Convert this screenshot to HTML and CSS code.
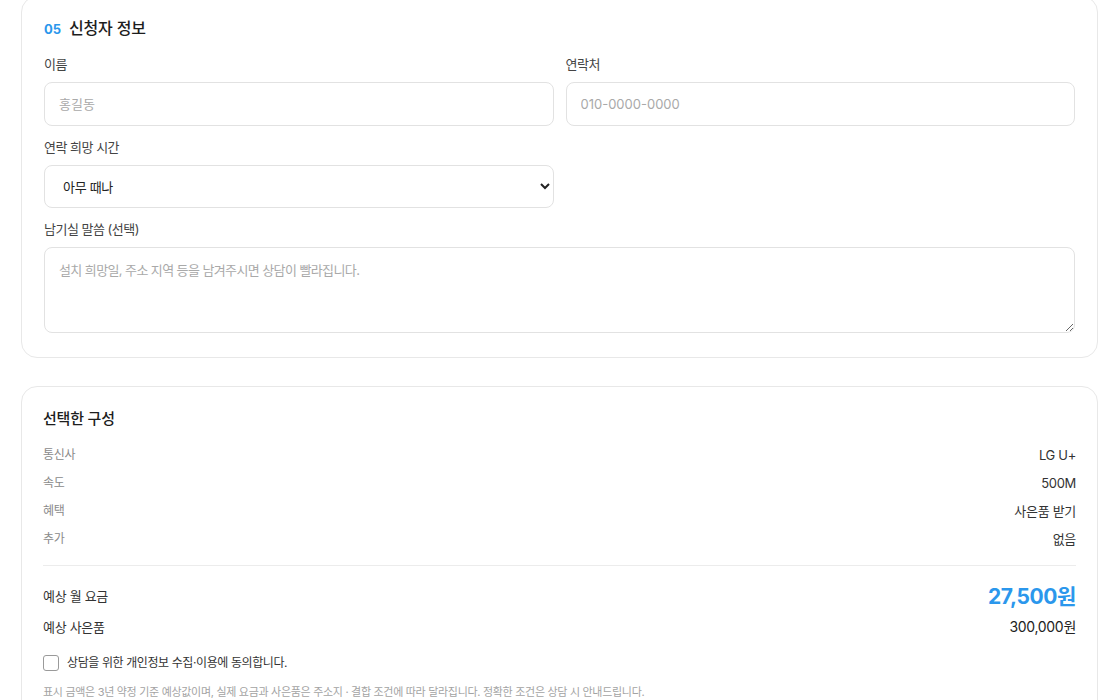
FILE: index.html
```html
<!DOCTYPE html>
<html lang="ko">
<head>
<meta charset="utf-8">
<title>신청서</title>
<link rel="stylesheet" href="styles.css">
</head>
<body>
<main class="page">
  <section class="card">
    <h2 class="card-title"><span class="step">05</span>신청자 정보</h2>
    <div class="grid">
      <label class="field">
        <span class="field-label">이름</span>
        <input class="control" type="text" placeholder="홍길동">
      </label>
      <label class="field">
        <span class="field-label">연락처</span>
        <input class="control" type="tel" placeholder="010-0000-0000">
      </label>
      <label class="field">
        <span class="field-label">연락 희망 시간</span>
        <select class="control select">
          <option>아무 때나</option>
          <option>오전</option>
          <option>오후</option>
          <option>저녁</option>
        </select>
      </label>
      <label class="field field-wide">
        <span class="field-label">남기실 말씀 (선택)</span>
        <textarea class="control textarea" placeholder="설치 희망일, 주소 지역 등을 남겨주시면 상담이 빨라집니다."></textarea>
      </label>
    </div>
  </section>

  <section class="card summary">
    <h2 class="summary-title">선택한 구성</h2>
    <dl class="spec">
      <div class="spec-row"><dt>통신사</dt><dd>LG U+</dd></div>
      <div class="spec-row"><dt>속도</dt><dd>500M</dd></div>
      <div class="spec-row"><dt>혜택</dt><dd>사은품 받기</dd></div>
      <div class="spec-row"><dt>추가</dt><dd>없음</dd></div>
    </dl>
    <div class="totals">
      <div class="total-row"><span>예상 월 요금</span><strong class="price">27,500원</strong></div>
      <div class="total-row"><span>예상 사은품</span><span class="gift">300,000원</span></div>
    </div>
    <label class="agree">
      <input type="checkbox" class="check">
      <span>상담을 위한 개인정보 수집·이용에 동의합니다.</span>
    </label>
    <p class="note">표시 금액은 3년 약정 기준 예상값이며, 실제 요금과 사은품은 주소지 · 결합 조건에 따라 달라집니다. 정확한 조건은 상담 시 안내드립니다.</p>
  </section>
</main>
</body>
</html>
```

FILE: styles.css
```css
* { box-sizing: border-box; }

html, body {
  margin: 0;
  background: #ffffff;
  font-family: "Inter", "Noto Sans CJK KR", sans-serif;
  color: #222;
  overflow: hidden;
}

.page {
  margin-top: -4px;
  padding: 0 22px 40px 21px;
  display: flex;
  flex-direction: column;
  gap: 28px;
}

.card {
  border: 1px solid #e8e8e8;
  border-radius: 16px;
  padding: 19px 22px 24px;
  background: #fff;
}

.card-title {
  margin: 0 0 13px;
  font-size: 16px;
  line-height: 24px;
  font-weight: 500;
  display: flex;
  align-items: baseline;
  gap: 8px;
  color: #1d1d1d;
  letter-spacing: -0.2px;
}

.step {
  color: #2b97ec;
  font-size: 13px;
  font-weight: 700;
  letter-spacing: 0;
}

.grid {
  display: grid;
  grid-template-columns: 1fr 1fr;
  column-gap: 12px;
  row-gap: 11px;
}

.field {
  display: flex;
  flex-direction: column;
  gap: 8px;
}

.field-wide { grid-column: 1 / -1; }

.field-label {
  font-size: 13px;
  line-height: 20px;
  color: #444;
  letter-spacing: -0.5px;
}

.control {
  font: inherit;
  font-size: 13px;
  color: #222;
  height: 44px;
  padding: 0 14px;
  border: 1px solid #e2e2e2;
  border-radius: 8px;
  background: #fff;
  outline: none;
}

.control::placeholder { color: #a9a9a9; }

.select {
  height: 43px;
  padding: 0 10px 0 14px;
  letter-spacing: -0.3px;
}

.textarea {
  height: 86px;
  padding: 13px 14px;
  resize: vertical;
  line-height: 18px;
  letter-spacing: -0.6px;
}

.summary {
  padding: 21px 21px 22px;
}

.summary-title {
  margin: 0 0 15px;
  font-size: 15px;
  line-height: 22px;
  font-weight: 500;
  color: #1d1d1d;
  letter-spacing: -0.2px;
}

.spec {
  margin: 0;
  display: flex;
  flex-direction: column;
  gap: 8px;
  padding-bottom: 16px;
  border-bottom: 1px solid #ececec;
}

.spec-row {
  display: flex;
  justify-content: space-between;
  align-items: center;
  line-height: 20px;
}

.spec-row dt {
  font-size: 12px;
  color: #8a8a8a;
  letter-spacing: -0.3px;
}

.spec-row dd {
  margin: 0;
  font-size: 13px;
  color: #333;
  letter-spacing: -0.3px;
}

.totals {
  display: flex;
  flex-direction: column;
  padding-top: 14px;
  gap: 2px;
}

.total-row {
  display: flex;
  justify-content: space-between;
  align-items: center;
  font-size: 13px;
  color: #333;
  min-height: 28px;
  letter-spacing: -0.3px;
}

.price {
  color: #2b97ec;
  font-size: 21px;
  font-weight: 700;
  letter-spacing: -0.4px;
}

.gift {
  font-size: 14px;
  color: #222;
}

.agree {
  display: flex;
  align-items: center;
  gap: 8px;
  margin-top: 13px;
  font-size: 12px;
  color: #333;
  line-height: 20px;
  letter-spacing: -0.4px;
}

.check {
  appearance: none;
  margin: 0;
  width: 16px;
  height: 16px;
  border: 1.5px solid #9a9a9a;
  border-radius: 3px;
  background: #fff;
}

.note {
  margin: 11px 0 0;
  font-size: 11px;
  line-height: 16px;
  color: #a3a3a3;
  letter-spacing: -0.3px;
}
```
